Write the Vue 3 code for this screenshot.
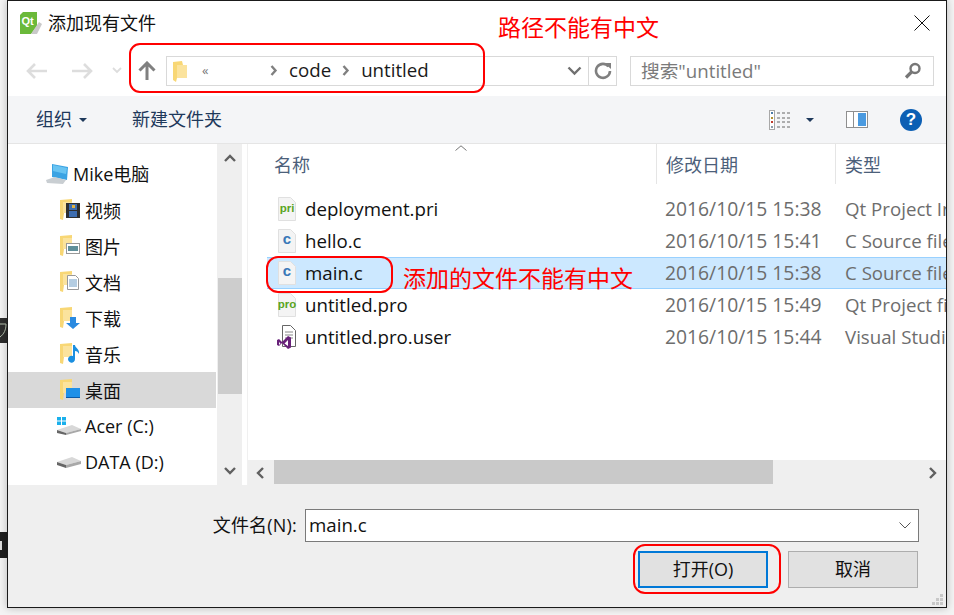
<script setup>
const nav = [
  { label: '视频', kind: 'video' },
  { label: '图片', kind: 'pic' },
  { label: '文档', kind: 'doc' },
  { label: '下载', kind: 'down' },
  { label: '音乐', kind: 'music' },
  { label: '桌面', kind: 'desk', active: true },
]
const files = [
  { name: 'deployment.pri', date: '2016/10/15 15:38', type: 'Qt Project Include File', icon: 'pri', color: '#5aa51e' },
  { name: 'hello.c', date: '2016/10/15 15:41', type: 'C Source file', icon: 'c', color: '#3a78b8' },
  { name: 'main.c', date: '2016/10/15 15:38', type: 'C Source file', icon: 'c', color: '#3a78b8', selected: true },
  { name: 'untitled.pro', date: '2016/10/15 15:49', type: 'Qt Project file', icon: 'pro', color: '#5aa51e' },
  { name: 'untitled.pro.user', date: '2016/10/15 15:44', type: 'Visual Studio', icon: 'vs', color: '#68217a' },
]
</script>

<template>
  <div class="page">
    <svg class="strip strip-a" width="8" height="25" viewBox="0 0 8 25">
      <rect width="8" height="25" fill="#2d2d2d" />
      <path d="M0 6h6c0 6-2 10-6 13" stroke="#b8c4b0" stroke-width="1" fill="none" />
    </svg>
    <svg class="strip strip-b" width="8" height="26" viewBox="0 0 8 26">
      <rect width="8" height="26" fill="#1f1f1f" />
      <rect y="9" width="2" height="9" fill="#ddd" />
    </svg>
    <div class="dialog">
      <header class="title">
        <svg class="qt" width="22" height="22" viewBox="0 0 22 22">
          <path d="M3 0h14v14l-6 8H0V3z" fill="#6bb93a" />
          <path d="M11 22l8-12 3 2-5 10z" fill="#c9c9c9" />
          <text x="1.500" y="13" class="qt-text">Qt</text>
        </svg>
        <span class="title-text">添加现有文件</span>
        <span class="note note-top">路径不能有中文</span>
        <svg class="close" width="16" height="16" viewBox="0 0 16 16">
          <path d="M0.500 0.500l15 15M15.500 0.500l-15 15" stroke="#111" stroke-width="1" fill="none" />
        </svg>
      </header>

      <div class="addr">
        <svg class="nav-arrow" width="24" height="18" viewBox="0 0 24 18">
          <path d="M10 2L3 9l7 7M3 9h19" stroke="#ddd" stroke-width="2.600" fill="none" />
        </svg>
        <svg class="nav-arrow fwd" width="24" height="18" viewBox="0 0 24 18">
          <path d="M14 2l7 7-7 7M21 9H2" stroke="#ddd" stroke-width="2.600" fill="none" />
        </svg>
        <svg class="mini" width="10" height="7" viewBox="0 0 10 7">
          <path d="M1 1l4 4 4-4" stroke="#ddd" stroke-width="1.800" fill="none" />
        </svg>
        <svg class="up" width="18" height="20" viewBox="0 0 18 20">
          <path d="M9 19V3M1.500 9.500L9 2l7.500 7.500" stroke="#808080" stroke-width="3" fill="none" />
        </svg>
        <div class="crumb">
          <svg class="folder" width="15" height="22" viewBox="0 0 15 22">
            <path d="M0 2l9-1 1 4h4v13H4l-1 4-3-2z" fill="#f8d775" />
            <path d="M4 5h10v13H4z" fill="#fbe39d" />
          </svg>
          <span class="dbl">«</span>
          <svg class="sep" width="8" height="11" viewBox="0 0 8 11"><path d="M1.500 1l4 4.500-4 4.500" stroke="#808080" stroke-width="2.400" fill="none" /></svg>
          <span class="crumb-text">code</span>
          <svg class="sep" width="8" height="11" viewBox="0 0 8 11"><path d="M1.500 1l4 4.500-4 4.500" stroke="#808080" stroke-width="2.400" fill="none" /></svg>
          <span class="crumb-text">untitled</span>
          <svg class="drop" width="15" height="10" viewBox="0 0 15 10"><path d="M1.500 1.500l6 6 6-6" stroke="#707070" stroke-width="2.400" fill="none" /></svg>
          <span class="refresh">
            <svg width="18" height="18" viewBox="0 0 18 18">
              <path d="M14.500 4.500A7 7 0 1 0 16 9" stroke="#808080" stroke-width="2.600" fill="none" />
              <path d="M10 1h7v6z" fill="#808080" />
            </svg>
          </span>
        </div>
        <div class="search">
          <span class="search-text">搜索"untitled"</span>
          <svg width="18" height="18" viewBox="0 0 18 18">
            <circle cx="11" cy="6.500" r="4.500" stroke="#777" stroke-width="2.400" fill="none" />
            <path d="M7.500 10L2 15.500" stroke="#777" stroke-width="3.200" />
          </svg>
        </div>
      </div>

      <div class="toolbar">
        <span class="tool">组织</span>
        <i class="caret"></i>
        <span class="tool new-folder">新建文件夹</span>
        <svg class="views" width="21" height="20" viewBox="0 0 21 20">
          <rect x="0.500" y="0.500" width="5" height="19" fill="#fff" stroke="#a8a8a8" />
          <rect x="2" y="2" width="2" height="2" fill="#4a7ba8" />
          <rect x="2" y="7" width="2" height="2" fill="#b09030" />
          <rect x="2" y="11" width="2" height="2" fill="#c0392b" />
          <rect x="2" y="16" width="2" height="2" fill="#8a9aa8" />
          <path d="M8 3h3M13 3h3M18 3h3M8 8h3M13 8h3M18 8h3M8 12h3M13 12h3M18 12h3M8 17h3M13 17h3M18 17h3" stroke="#666" stroke-width="1" />
        </svg>
        <i class="caret views-caret"></i>
        <svg class="pane" width="22" height="17" viewBox="0 0 22 17">
          <rect x="0.500" y="0.500" width="21" height="16" fill="#fff" stroke="#8f8f8f" />
          <rect x="12" y="2" width="8" height="13" fill="#4a9ae0" />
          <path d="M7.500 1v15" stroke="#8f8f8f" />
        </svg>
        <span class="help">?</span>
      </div>

      <div class="body">
        <aside class="tree">
          <div class="tree-list">
            <div class="row computer">
              <svg width="24" height="22" viewBox="0 0 24 22">
                <path d="M7 1l16 3-1 13-15-3z" fill="#3ba3e3" />
                <path d="M8 2l14 3-1 6-13-3z" fill="#69c4f2" />
                <path d="M1 17l9-3 11 3-3 4-16-1z" fill="#c9ced2" />
              </svg>
              <span class="computer-text">Mike电脑</span>
            </div>
            <div v-for="n in nav" :key="n.label" class="row lib" :class="{ active: n.active }">
              <span class="lib-icon">
                <svg width="21" height="22" viewBox="0 0 21 22">
                  <path d="M0 1l12-1v14H4l-1 7-3-1z" fill="#f8d775" />
                  <path d="M3 3h9v11H3z" fill="#fbe39d" />
                  <g v-if="n.kind === 'video'">
                    <rect x="6" y="4" width="14" height="15" fill="#2e2e2e" />
                    <rect x="9" y="5" width="8" height="6" fill="#3d6db0" />
                    <rect x="9" y="12" width="8" height="6" fill="#3d6db0" />
                    <rect x="12" y="6" width="3" height="3" fill="#e0b040" />
                  </g>
                  <g v-else-if="n.kind === 'pic'">
                    <rect x="6.500" y="8.500" width="13" height="10" fill="#fff" stroke="#999" />
                    <rect x="8" y="11" width="10" height="5" fill="#5f8f9a" />
                  </g>
                  <g v-else-if="n.kind === 'doc'">
                    <path d="M7.500 4.500h8l3 3v11h-11z" fill="#fff" stroke="#999" />
                    <path d="M9 9h8M9 11h8M9 13h8M9 15h8" stroke="#6a9bc4" stroke-width="1" />
                  </g>
                  <path v-else-if="n.kind === 'down'" d="M10 10h6v6h4l-7 6-7-6h4z" fill="#2a8ae0" />
                  <path v-else-if="n.kind === 'music'" d="M13 2h2c0 3 5 4 4 9-1-2-2-3-4-3v8a3.500 3.500 0 1 1-2-3z" fill="#1a8fe0" />
                  <g v-else>
                    <rect x="6" y="9" width="14" height="10" fill="#1e90e8" />
                    <path d="M6 18h14v1H6z" fill="#0a5aa8" />
                  </g>
                </svg>
              </span>
              <span>{{ n.label }}</span>
            </div>
            <div class="row drive">
              <svg width="24" height="18" viewBox="0 0 24 18">
                <rect x="0" y="0" width="4" height="3.500" fill="#1ab0ec" />
                <rect x="5" y="0" width="4" height="3.500" fill="#1ab0ec" />
                <rect x="0" y="4.500" width="4" height="3.500" fill="#1ab0ec" />
                <rect x="5" y="4.500" width="4" height="3.500" fill="#1ab0ec" />
                <path d="M0 13l15-5 9 4-15 4z" fill="#d8d8d8" />
                <path d="M0 13l9 3v2l-9-2z" fill="#666" />
                <path d="M9 16l15-4v2L9 18z" fill="#a8a8a8" />
              </svg>
              <span>Acer (C:)</span>
            </div>
            <div class="row drive data">
              <svg width="24" height="12" viewBox="0 0 24 12">
                <path d="M0 6l15-5 9 4-15 4z" fill="#d8d8d8" />
                <path d="M0 6l9 3v3l-9-3z" fill="#666" />
                <path d="M9 9l15-4v3L9 12z" fill="#a8a8a8" />
              </svg>
              <span>DATA (D:)</span>
            </div>
          </div>
          <div class="v-scroll">
            <svg width="12" height="8" viewBox="0 0 12 8"><path d="M1 7l5-5 5 5" stroke="#606060" stroke-width="2.400" fill="none" /></svg>
            <div class="v-space"><div class="v-thumb"></div></div>
            <svg width="12" height="8" viewBox="0 0 12 8"><path d="M1 1l5 5 5-5" stroke="#606060" stroke-width="2.400" fill="none" /></svg>
          </div>
        </aside>

        <section class="files">
          <div class="list-head">
            <div class="col col-name">
              <svg class="sort" width="12" height="6" viewBox="0 0 12 6"><path d="M0.500 5.500L6 0.800l5.500 4.700" stroke="#777" fill="none" /></svg>
              名称
            </div>
            <div class="col col-date">修改日期</div>
            <div class="col col-type">类型</div>
          </div>
          <div class="list">
            <div v-for="f in files" :key="f.name + f.date" class="file" :class="{ selected: f.selected }">
              <span class="file-icon">
                <svg width="20" height="24" viewBox="0 0 20 24">
                  <template v-if="f.icon === 'vs'">
                    <path d="M5.500 0.500h8l5 5v16h-13z" fill="#fff" stroke="#666" />
                    <path d="M8 7h8M8 10h8M8 13h8" stroke="#888" />
                    <path d="M0 15l2-1 3 3 6-6 3 1.500v10L11 24l-6-6-3 3-2-1zM2 17v3l1.500-1.500zM11 15l-3.500 3.500L11 21z" fill="#68217a" fill-rule="evenodd" />
                  </template>
                  <template v-else>
                    <path d="M1.500 0.500h12l5 5v18h-17z" fill="#f4f4f4" stroke="#e0e0e0" />
                    <text x="10" y="15" text-anchor="middle" class="file-glyph" :class="f.icon === 'c' ? 'glyph-c' : 'glyph-wide'" :fill="f.color">{{ f.icon }}</text>
                  </template>
                </svg>
              </span>
              <span class="file-name">{{ f.name }}</span>
              <span class="file-date">{{ f.date }}</span>
              <span class="file-type">{{ f.type }}</span>
            </div>
          </div>
          <div class="h-scroll">
            <svg width="8" height="12" viewBox="0 0 8 12"><path d="M7 1L2 6l5 5" stroke="#606060" stroke-width="2.400" fill="none" /></svg>
            <div class="h-space"><div class="h-thumb"></div></div>
            <svg width="8" height="12" viewBox="0 0 8 12"><path d="M1 1l5 5-5 5" stroke="#606060" stroke-width="2.400" fill="none" /></svg>
          </div>
        </section>
      </div>

      <footer class="foot">
        <div class="name-row">
          <label>文件名(N):</label>
          <div class="combo">
            <span class="combo-text">main.c</span>
            <svg width="12" height="7" viewBox="0 0 12 7"><path d="M0.500 0.500L6 6l5.500-5.500" stroke="#555" fill="none" /></svg>
          </div>
        </div>
        <div class="btn-row">
          <button class="btn primary"><span>打开(O)</span></button>
          <button class="btn"><span>取消</span></button>
        </div>
        <svg class="grip" width="12" height="12" viewBox="0 0 12 12">
          <path d="M8 0h3v3H8zM4 4h3v3H4zM8 4h3v3H8zM0 8h3v3H0zM4 8h3v3H4zM8 8h3v3H8z" fill="#c8c8c8" />
        </svg>
      </footer>

      <span class="mark mark-path"></span>
      <span class="mark mark-file"></span>
      <span class="mark mark-btn"></span>
      <span class="note note-file">添加的文件不能有中文</span>
    </div>
  </div>
</template>

<style>
html, body { margin: 0; padding: 0; background: #fff; }
</style>

<style scoped>
.page {
  width: 954px;
  height: 615px;
  position: relative;
  overflow: hidden;
  background: #f4f4f4;
  font-family: "Open Sans", "Noto Sans CJK SC", sans-serif;
}
.strip { position: absolute; left: 0; display: block; }
.strip-a { top: 318px; }
.strip-b { top: 532px; }
.dialog {
  position: absolute;
  left: 7px;
  top: 0;
  width: 940px;
  height: 608px;
  box-sizing: border-box;
  border: 1px solid #1a1a1a;
  background: #fff;
  display: flex;
  flex-direction: column;
  overflow: hidden;
  box-shadow: 0 0 8px rgba(0,0,0,.25);
}
.title {
  height: 44px;
  flex: none;
  display: flex;
  align-items: center;
  padding-left: 12px;
  box-sizing: border-box;
  color: #111;
}
.qt { flex: none; margin-top: -1px; }
.qt-text { font: bold 11px "Liberation Sans", sans-serif; fill: #fff; }
.title-text { margin-left: 6px; margin-top: -1px; font-size: 18px; line-height: 24px; }
.note { color: #f00; font-family: "Noto Sans CJK SC", sans-serif; white-space: nowrap; }
.note-top { margin-left: 342px; font-size: 23px; line-height: 30px; margin-top: 6px; }
.close { margin-left: auto; margin-right: 16px; margin-top: -1px; }

.addr {
  height: 51px;
  flex: none;
  display: flex;
  align-items: center;
}
.nav-arrow { margin-left: 17px; flex: none; }
.nav-arrow.fwd { margin-left: 21px; }
.mini { margin-left: 18px; flex: none; }
.up { margin-left: 16px; flex: none; }
.crumb {
  width: 451px;
  height: 30px;
  margin-left: 10px;
  box-sizing: border-box;
  border: 1px solid #d9d9d9;
  display: flex;
  align-items: center;
  font-size: 18.700px;
  color: #1a1a1a;
  flex: none;
}
.folder { margin-left: 6px; flex: none; }
.dbl { margin-left: 14px; margin-top: -2px; font-size: 13px; color: #777; width: 68px; flex: none; }
.sep { flex: none; margin-right: 11px; }
.crumb-text { margin-right: 11px; margin-top: -2px; line-height: 28px; }
.drop { margin-left: auto; margin-right: 6px; flex: none; }
.refresh {
  width: 27px;
  height: 28px;
  border-left: 1px solid #d9d9d9;
  display: flex;
  align-items: center;
  justify-content: center;
  flex: none;
}
.search {
  width: 304px;
  height: 30px;
  margin-left: 13px;
  box-sizing: border-box;
  border: 1px solid #d9d9d9;
  display: flex;
  align-items: center;
  justify-content: space-between;
  padding: 0 11px 0 10px;
  color: #7a7a7a;
  font-size: 18.700px;
  flex: none;
}
.search-text { margin-top: -2px; }

.toolbar {
  height: 48px;
  flex: none;
  background: #f4f5f7;
  border-bottom: 1px solid #e5e5e5;
  display: flex;
  align-items: center;
  box-sizing: border-box;
  color: #1e395b;
  font-size: 18px;
}
.tool { line-height: 24px; margin-top: -1px; }
.toolbar > .tool:first-child { margin-left: 28px; }
.caret {
  width: 0;
  height: 0;
  border-left: 4px solid transparent;
  border-right: 4px solid transparent;
  border-top: 4px solid #1e395b;
  margin-left: 7px;
  flex: none;
}
.new-folder { margin-left: 45px; }
.views { margin-left: auto; flex: none; }
.views-caret { margin-left: 16px; }
.pane { margin-left: 32px; flex: none; }
.help {
  width: 22px;
  height: 22px;
  margin-left: 32px;
  margin-right: 24px;
  border-radius: 50%;
  background: #0c5fb4;
  color: #fff;
  font: bold 17px/22px "Liberation Sans", sans-serif;
  text-align: center;
  flex: none;
}

.body { height: 341px; flex: none; display: flex; }
.tree { width: 234px; flex: none; display: flex; }
.tree-list { width: 209px; padding-top: 12px; box-sizing: border-box; background: #fff; }
.row {
  height: 36px;
  display: flex;
  align-items: center;
  font-size: 18px;
  color: #111;
  white-space: nowrap;
  box-sizing: border-box;
}
.computer { padding-left: 37px; gap: 4px; }
.computer svg { flex: none; }
.computer-text { margin-top: -2px; }
.lib { padding-left: 52px; }
.lib-icon { width: 25px; flex: none; display: flex; }
.lib.active { background: #d9d9d9; width: 208px; }
.drive { padding-left: 49px; gap: 4px; }
.drive svg { flex: none; }
.v-scroll {
  width: 25px;
  background: #efefef;
  display: flex;
  flex-direction: column;
  align-items: center;
  box-sizing: border-box;
  padding: 10px 0;
}
.v-scroll svg { flex: none; }
.v-space { flex: 1; width: 24px; margin: 6px 0; position: relative; }
.v-thumb { position: absolute; top: 110px; left: 0; right: 0; height: 116px; background: #cdcdcd; }

.files { flex: 1; min-width: 0; display: flex; flex-direction: column; margin-left: 5px; overflow: hidden; border-left: 1px solid #f0f0f0; }
.list-head {
  height: 40px;
  flex: none;
  display: flex;
  font-size: 18px;
  color: #4c607a;
}
.col { display: flex; align-items: center; position: relative; box-sizing: border-box; flex: none; }
.col-name { width: 408px; padding-left: 26px; }
.col-date { width: 179px; padding-left: 9px; border-left: 1px solid #e5e5e5; }
.col-type { width: 120px; padding-left: 9px; border-left: 1px solid #e5e5e5; }
.sort { position: absolute; left: 207px; top: 1px; }
.list { flex: 1; padding: 9px 0 0 19px; overflow: hidden; }
.file {
  height: 32px;
  display: flex;
  align-items: center;
  box-sizing: border-box;
  white-space: nowrap;
}
.file.selected { background: #cce8ff; border-top: 1px solid #99d1ff; border-bottom: 1px solid #99d1ff; }
.file-icon { width: 28px; margin-left: 10px; flex: none; display: flex; }
.file-name { width: 360px; flex: none; color: #111; font-size: 18.700px; margin-top: -2px; }
.file-date { width: 180px; flex: none; color: #6d6d6d; font-size: 19.300px; margin-top: -2px; }
.file-type { flex: none; color: #6d6d6d; font-size: 18.700px; margin-top: -2px; }
.file-glyph { font-family: "Liberation Sans", sans-serif; font-weight: bold; }
.glyph-c { font-size: 15px; }
.glyph-wide { font-size: 11.500px; }

.h-scroll {
  height: 25px;
  flex: none;
  background: #efefef;
  display: flex;
  align-items: center;
  padding: 0 9px 0 8px;
}
.h-scroll svg { flex: none; }
.h-space { flex: 1; height: 25px; position: relative; margin: 0 8px; }
.h-thumb { position: absolute; left: 2px; width: 499px; top: 0; bottom: 1px; background: #c9c9c9; }

.foot {
  flex: 1;
  background: #efefef;
  position: relative;
  display: flex;
  flex-direction: column;
  padding-right: 27px;
}
.name-row {
  display: flex;
  align-items: center;
  justify-content: flex-end;
  margin-top: 24px;
  font-size: 18px;
  color: #111;
}
.name-row label { margin-right: 8px; margin-top: -3px; letter-spacing: 0.200px; }
.combo {
  width: 614px;
  height: 33px;
  box-sizing: border-box;
  border: 1px solid #7a7a7a;
  background: #fff;
  display: flex;
  align-items: center;
  justify-content: space-between;
  padding: 0 7px 0 3px;
  font-size: 18.700px;
}
.combo-text { margin-top: -2px; }
.btn-row { display: flex; justify-content: flex-end; gap: 20px; margin-top: 9px; margin-right: 1px; }
.btn {
  width: 130px;
  height: 37px;
  box-sizing: border-box;
  border: 1px solid #adadad;
  background: #e1e1e1;
  font-family: "Open Sans", "Noto Sans CJK SC", sans-serif;
  font-size: 18px;
  color: #111;
  padding: 0 0 3px;
}
.btn.primary { border: 2px solid #0078d7; }
.grip { position: absolute; right: 2px; bottom: 1px; }

.mark {
  position: absolute;
  box-sizing: border-box;
  border: 2px solid #f00;
  border-radius: 11px;
  pointer-events: none;
}
.mark-path { left: 121px; top: 42px; width: 356px; height: 50px; }
.mark-file { left: 258px; top: 255px; width: 127px; height: 37px; border-radius: 12px; }
.mark-btn { left: 625px; top: 543px; width: 148px; height: 50px; border-radius: 12px; }
.note-file {
  position: absolute;
  left: 395px;
  top: 261px;
  font-size: 23px;
  line-height: 30px;
}
</style>
